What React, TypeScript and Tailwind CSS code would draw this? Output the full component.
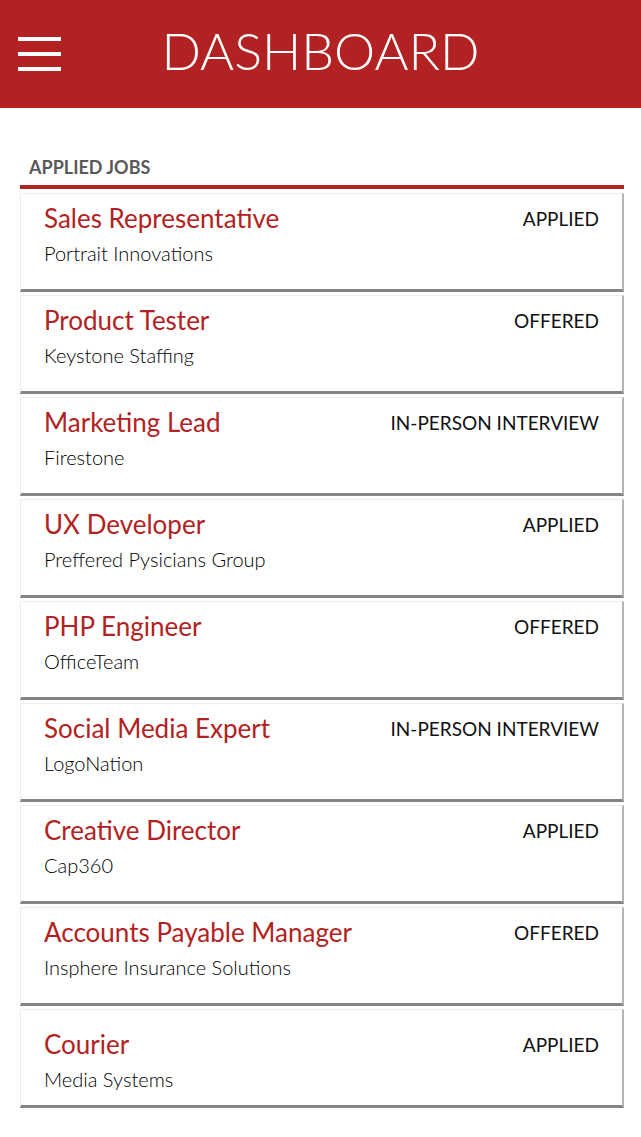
type Job = {
  title: string;
  company: string;
  status: string;
};

const jobs: Job[] = [
  { title: "Sales Representative", company: "Portrait Innovations", status: "Applied" },
  { title: "Product Tester", company: "Keystone Staffing", status: "Offered" },
  { title: "Marketing Lead", company: "Firestone", status: "In-Person Interview" },
  { title: "UX Developer", company: "Preffered Pysicians Group", status: "Applied" },
  { title: "PHP Engineer", company: "OfficeTeam", status: "Offered" },
  { title: "Social Media Expert", company: "LogoNation", status: "In-Person Interview" },
  { title: "Creative Director", company: "Cap360", status: "Applied" },
  { title: "Accounts Payable Manager", company: "Insphere Insurance Solutions", status: "Offered" },
  { title: "Courier", company: "Media Systems", status: "Applied" },
];

function JobCard({ job, last }: { job: Job; last: boolean }) {
  return (
    <li
      className={
        "mb-[3px] h-[99px] border-l border-t border-[#ececec] border-r-2 border-r-[#b5b5b5] border-b-[3px] border-b-[#858585] bg-white pl-[23px] pr-[23px] " +
        (last ? "pt-[19px]" : "pt-[9px]")
      }
    >
      <div className="flex items-start justify-between">
        <h3 className="text-[26px] leading-[30px] text-[#b22222]">{job.title}</h3>
        <span className="pt-[1px] text-[19px] leading-[30px] uppercase text-[#111]">{job.status}</span>
      </div>
      <p className="mt-[6px] text-[20px] font-light leading-[26px] text-black">{job.company}</p>
    </li>
  );
}

export default function App() {
  return (
    <div className="min-h-[1137px] bg-white font-['Lato','Noto_Sans',sans-serif]">
      <header className="grid h-[108px] grid-cols-[1fr_auto_1fr] items-center bg-[#b22222]">
        <button className="flex w-[43px] flex-col gap-[10.5px] ml-[18px]" aria-label="Menu">
          <span className="h-[4.5px] bg-white" />
          <span className="h-[4.5px] bg-white" />
          <span className="h-[4.5px] bg-white" />
        </button>
        <h1 className="pb-[8px] text-[52px] font-light leading-none text-white">DASHBOARD</h1>
        <div />
      </header>

      <main className="pl-[20px] pr-[17px] pt-[47px]">
        <h2 className="pl-[9px] text-[18px] font-bold leading-[24px] text-[#5a5a5a]">APPLIED JOBS</h2>
        <div className="mt-[6px] mb-[4px] h-[4px] bg-[#b22222]" />
        <ul>
          {jobs.map((job, i) => (
            <JobCard key={job.title} job={job} last={i === jobs.length - 1} />
          ))}
        </ul>
      </main>
    </div>
  );
}
